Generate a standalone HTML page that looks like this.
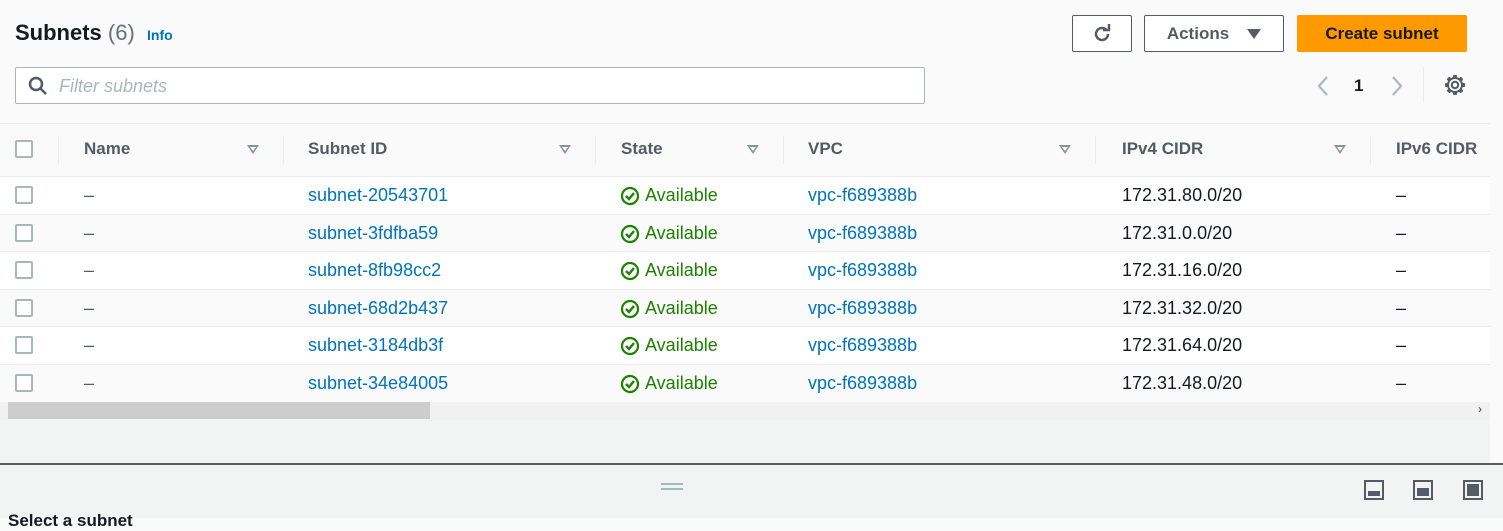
<!DOCTYPE html>
<html><head><meta charset="utf-8"><style>
*{box-sizing:border-box;margin:0;padding:0}
body{width:1503px;height:518px;overflow:hidden;background:#fafafa;font-family:"Liberation Sans",sans-serif;position:relative;color:#16191f}
.a{position:absolute}
.btn{position:absolute;border:1px solid #545b64;border-radius:2px;background:#fff;height:37px;top:15px;font-weight:bold;font-size:17px;color:#545b64;display:flex;align-items:center;justify-content:center}
.th{position:absolute;top:139px;font-weight:bold;font-size:17px;color:#545b64}
.tri{position:absolute;top:145px;width:0;height:0;border-left:6px solid transparent;border-right:6px solid transparent;border-top:9px solid #879596}
.tri::after{content:"";position:absolute;left:-3px;top:-7px;border-left:3px solid transparent;border-right:3px solid transparent;border-top:4px solid #fafafa}
.sep{position:absolute;top:136px;height:28px;width:1px;background:#e9ebed}
.row{position:absolute;left:0;width:1490px;height:38px;border-top:1px solid #eaeded;font-size:18px}
.row span{position:absolute;top:8px}
.cb{position:absolute;left:15px;width:18px;height:18px;border:2px solid #aab7b8;border-radius:2px;background:#fff}
.lnk{color:#0073bb}
.ok{color:#1d8102}
.ic{position:absolute;top:9px;left:620px;width:20px;height:20px}
</style></head><body>
<div class="a" style="left:15px;top:20px;font-size:22px;font-weight:bold">Subnets <span style="font-weight:normal;color:#687078">(6)</span></div>
<div class="a" style="left:147px;top:27px;font-size:14px;font-weight:bold;color:#0073bb">Info</div>
<div class="btn" style="left:1072px;width:60px"><svg width="22" height="22" viewBox="0 0 22 22"><path d="M17 11a6 6 0 1 1-2-4.5" fill="none" stroke="#545b64" stroke-width="2.5"/><path d="M12 7h6V1" fill="none" stroke="#545b64" stroke-width="2.5"/></svg></div>
<div class="btn" style="left:1144px;width:140px">Actions<span style="margin-left:18px;border-left:7px solid transparent;border-right:7px solid transparent;border-top:10px solid #545b64"></span></div>
<div class="btn" style="left:1297px;width:170px;background:#ff9900;border-color:#ff9900;color:#16191f">Create subnet</div>
<div class="a" style="left:15px;top:67px;width:910px;height:37px;border:1px solid #aab7b8;border-radius:2px;background:#fff"></div>
<svg class="a" style="left:28px;top:76px" width="20" height="20" viewBox="0 0 20 20"><circle cx="8" cy="8" r="6" fill="none" stroke="#545b64" stroke-width="2.5"/><path d="M12.5 12.5L18 18" stroke="#545b64" stroke-width="2.5"/></svg>
<div class="a" style="left:59px;top:76px;font-size:18px;font-style:italic;color:#aab7b8">Filter subnets</div>
<svg class="a" style="left:1316px;top:75px" width="14" height="22"><path d="M11 2L3 11l8 9" fill="none" stroke="#aab7b8" stroke-width="2.2"/></svg>
<div class="a" style="left:1354px;top:76px;font-size:17px;font-weight:bold">1</div>
<svg class="a" style="left:1390px;top:75px" width="14" height="22"><path d="M3 2l8 9-8 9" fill="none" stroke="#aab7b8" stroke-width="2.2"/></svg>
<div class="a" style="left:1423px;top:67px;width:1px;height:36px;background:#eaeded"></div>
<svg class="a" style="left:1444px;top:74px" width="22" height="22" viewBox="0 0 22 22"><g fill="#545b64"><rect x="9" y="1" width="4" height="20" rx="1"/><rect x="9" y="1" width="4" height="20" rx="1" transform="rotate(45 11 11)"/><rect x="9" y="1" width="4" height="20" rx="1" transform="rotate(90 11 11)"/><rect x="9" y="1" width="4" height="20" rx="1" transform="rotate(135 11 11)"/><circle cx="11" cy="11" r="8"/></g><circle cx="11" cy="11" r="6" fill="#fafafa"/><circle cx="11" cy="11" r="4.5" fill="none" stroke="#545b64" stroke-width="0"/><circle cx="11" cy="11" r="3.2" fill="none" stroke="#545b64" stroke-width="2"/></svg>
<div class="a" style="left:0;top:123px;width:1490px;height:1px;background:#eaeded"></div>
<div class="cb" style="top:140px"></div>
<div class="sep" style="left:58px"></div>
<div class="th" style="left:84px">Name</div><div class="tri" style="left:247px"></div><div class="sep" style="left:283px"></div>
<div class="th" style="left:308px">Subnet ID</div><div class="tri" style="left:559px"></div><div class="sep" style="left:595px"></div>
<div class="th" style="left:621px">State</div><div class="tri" style="left:747px"></div><div class="sep" style="left:783px"></div>
<div class="th" style="left:808px">VPC</div><div class="tri" style="left:1059px"></div><div class="sep" style="left:1095px"></div>
<div class="th" style="left:1122px">IPv4 CIDR</div><div class="tri" style="left:1334px"></div><div class="sep" style="left:1370px"></div>
<div class="th" style="left:1396px">IPv6 CIDR</div>
<div id="rows"></div>
<script>
var d=[["subnet-20543701","172.31.80.0/20"],["subnet-3fdfba59","172.31.0.0/20"],["subnet-8fb98cc2","172.31.16.0/20"],["subnet-68d2b437","172.31.32.0/20"],["subnet-3184db3f","172.31.64.0/20"],["subnet-34e84005","172.31.48.0/20"]];
var h="";d.forEach(function(r,i){var t=176+i*37.5;h+='<div class="row" style="top:'+t+'px;background:'+(i%2?'#fafafa':'#fff')+'"><div class="cb" style="top:9px"></div><span style="left:84px;color:#545b64">–</span><span class="lnk" style="left:308px">'+r[0]+'</span><svg class="ic" viewBox="0 0 20 20"><circle cx="10" cy="10" r="8" fill="none" stroke="#1d8102" stroke-width="2.2"/><path d="M6 10l3 3 5-6" fill="none" stroke="#1d8102" stroke-width="2.4"/></svg><span class="ok" style="left:645px">Available</span><span class="lnk" style="left:808px">vpc-f689388b</span><span style="left:1122px">'+r[1]+'</span><span style="left:1396px">–</span></div>'});
document.getElementById("rows").innerHTML=h;
</script>
<div class="a" style="left:0;top:402px;width:1490px;height:18px;background:#f1f1f1"></div>
<div class="a" style="left:8px;top:402px;width:422px;height:17px;background:#cdcdcd"></div>
<div class="a" style="left:1478px;top:402px;font-size:12px;color:#333">›</div>
<div class="a" style="left:0;top:420px;width:1490px;height:44px;background:#f2f3f3"></div>
<div class="a" style="left:1490px;top:0;width:13px;height:464px;background:#fafafa"></div>
<div class="a" style="left:0;top:463px;width:1503px;height:2px;background:#545b64"></div>
<div class="a" style="left:0;top:465px;width:1503px;height:53px;background:#f2f3f3"></div>
<div class="a" style="left:661px;top:483px;width:22px;height:2px;background:#aab7b8"></div>
<div class="a" style="left:661px;top:488px;width:22px;height:2px;background:#aab7b8"></div>
<div class="a" style="left:1364px;top:480px;width:20px;height:20px;border:2px solid #545b64"><div class="a" style="left:2px;bottom:2px;width:12px;height:5px;background:#545b64"></div></div>
<div class="a" style="left:1413px;top:480px;width:20px;height:20px;border:2px solid #545b64"><div class="a" style="left:2px;bottom:2px;width:12px;height:8px;background:#545b64"></div></div>
<div class="a" style="left:1463px;top:480px;width:20px;height:20px;border:2px solid #545b64"><div class="a" style="left:2px;bottom:2px;width:12px;height:12px;background:#545b64"></div></div>
<div class="a" style="left:8px;top:511px;font-size:17px;font-weight:bold">Select a subnet</div>
</body></html>
